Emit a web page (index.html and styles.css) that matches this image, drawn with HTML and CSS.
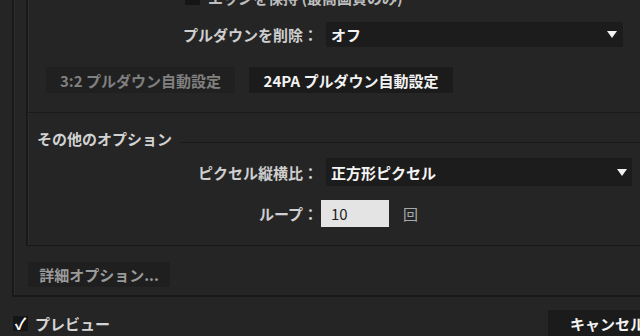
FILE: index.html
```html
<!DOCTYPE html>
<html lang="ja">
<head>
    <meta charset="utf-8">
    <title>フッテージを変換</title>
    <link rel="stylesheet" href="styles.css">
</head>
<body>
    <div class="dialog">
        <div class="outer">
            <div class="inner">
                <div class="group group-top">
                    <div class="row-check">
                        <span class="check-box"></span>
                        <span class="check-label">エッジを保持 (最高画質のみ)</span>
                    </div>
                    <div class="field">
                        <label class="field-label">プルダウンを削除：</label>
                        <div class="select select-pulldown">
                            <span>オフ</span>
                            <span class="arrow"></span>
                        </div>
                    </div>
                    <div class="btn-row">
                        <button class="btn btn-disabled btn-32">3:2 プルダウン自動設定</button>
                        <button class="btn btn-24pa">24PA プルダウン自動設定</button>
                    </div>
                </div>
                <div class="group group-other">
                    <div class="legend">
                        <span class="legend-text">その他のオプション</span>
                        <span class="legend-line"></span>
                    </div>
                    <div class="field field-pixel">
                        <label class="field-label">ピクセル縦横比：</label>
                        <div class="select select-pixel">
                            <span>正方形ピクセル</span>
                            <span class="arrow"></span>
                        </div>
                    </div>
                    <div class="field field-loop">
                        <label class="field-label">ループ：</label>
                        <div class="text-input">10</div>
                        <span class="unit">回</span>
                    </div>
                </div>
            </div>
            <button class="btn btn-more">詳細オプション...</button>
        </div>
        <div class="footer">
            <label class="preview">
                <span class="check-box checked">✓</span>
                <span>プレビュー</span>
            </label>
            <button class="btn btn-cancel">キャンセル</button>
        </div>
    </div>
</body>
</html>
```

FILE: styles.css
```css
html, body {
    margin: 0;
    padding: 0;
    height: 336px;
    overflow: hidden;
}

body {
    background-color: #252525;
    color: #cfcfcf;
    font-family: "Noto Sans CJK JP", "Noto Sans", sans-serif;
    font-size: 15px;
    font-weight: 700;
}

.dialog {
    padding-left: 12px;
}

.outer {
    margin-top: -20px;
    padding: 0 0 8px 12px;
    border-left: 2px solid #191919;
    border-bottom: 2px solid #191919;
    box-shadow: inset 1px 0 0 #2d2d2d;
}

.inner {
    border-left: 2px solid #191919;
    border-bottom: 1px solid #191919;
    box-shadow: inset 1px 0 0 #2d2d2d;
}

.group-top {
    padding-bottom: 19px;
    border-bottom: 1px solid #1a1a1a;
}

.group-other {
    padding-bottom: 18px;
}

/* rows */

.row-check {
    display: flex;
    align-items: center;
    height: 34px;
    padding-left: 157px;
}

.check-box {
    display: inline-block;
    width: 15px;
    height: 15px;
    background: #151515;
    flex-shrink: 0;
}

.check-label {
    margin-left: 8px;
    color: #bdbdbd;
}

.field {
    display: flex;
    align-items: center;
    margin-top: 8px;
}

.field-label {
    width: 290px;
    text-align: right;
    color: #cfcfcf;
}

.select {
    display: flex;
    align-items: center;
    justify-content: space-between;
    height: 25px;
    margin-left: 8px;
    padding: 0 6px 0 5px;
    background: #1c1c1c;
    color: #f4f4f4;
    box-sizing: border-box;
}

.select-pulldown {
    width: 297px;
}

.select-pixel {
    width: 306px;
    height: 28px;
    padding-right: 5px;
}

.arrow {
    width: 0;
    height: 0;
    border-left: 5px solid transparent;
    border-right: 5px solid transparent;
    border-top: 7px solid #f2f2f2;
}

.btn-row {
    display: flex;
    gap: 14px;
    margin-top: 20px;
    padding-left: 18px;
}

.btn {
    height: 26px;
    padding: 0;
    border: none;
    background: #1e1e1e;
    color: #f2f2f2;
    font-family: inherit;
    font-size: 15px;
    font-weight: 700;
    white-space: nowrap;
}

.btn-disabled {
    color: #808080;
    background: #202020;
}

.btn-32 {
    width: 189px;
}

.btn-24pa {
    width: 204px;
    background: #1b1b1b;
}

/* その他のオプション */

.legend {
    display: flex;
    align-items: center;
    height: 16px;
    margin-top: 17px;
    padding-left: 9px;
}

.legend-text {
    color: #d2d2d2;
}

.legend-line {
    flex: 1;
    height: 1px;
    margin: 8px 0 0 8px;
    background: #1a1a1a;
}

.field-pixel {
    margin-top: 12px;
}

.field-loop {
    margin-top: 14px;
}

.text-input {
    width: 68px;
    height: 27px;
    margin-left: 3px;
    padding-left: 10px;
    box-sizing: border-box;
    background: #e4e4e4;
    color: #1e1e1e;
    font-weight: 400;
    line-height: 27px;
}

.unit {
    margin-left: 14px;
    color: #a8a8a8;
    font-weight: 400;
}

.btn-more {
    display: block;
    width: 142px;
    height: 25px;
    margin: 16px 0 0 2px;
    background: #1f1f1f;
    color: #9a9a9a;
}

/* footer */

.footer {
    display: flex;
    align-items: flex-start;
    padding: 13px 0 0 1px;
}

.preview {
    display: flex;
    align-items: center;
    height: 26px;
    color: #d4d4d4;
}

.check-box.checked {
    display: flex;
    align-items: center;
    justify-content: center;
    color: #ffffff;
    font-size: 16px;
    line-height: 15px;
    margin-right: 7px;
}

.btn-cancel {
    margin-left: auto;
    width: 92px;
    padding-left: 22px;
    text-align: left;
    background: #1b1b1b;
    overflow: visible;
}
```
